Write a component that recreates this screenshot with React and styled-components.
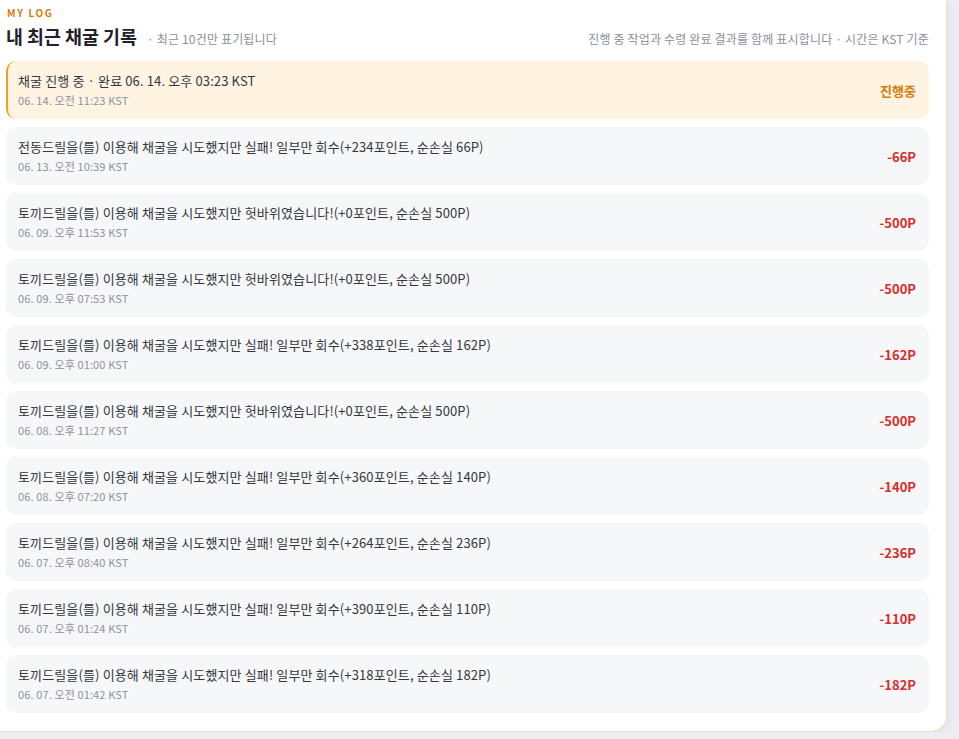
import styled, { createGlobalStyle } from 'styled-components';

const GlobalStyle = createGlobalStyle`
	html, body {
		margin: 0;
		background: #eceef2;
		font-family: 'Noto Sans CJK KR', 'Noto Sans', sans-serif;
	}
`;

const logs = [
	{ title: '채굴 진행 중 · 완료 06. 14. 오후 03:23 KST', time: '06. 14. 오전 11:23 KST', value: '진행중', pending: true },
	{ title: '전동드릴을(를) 이용해 채굴을 시도했지만 실패! 일부만 회수(+234포인트, 순손실 66P)', time: '06. 13. 오전 10:39 KST', value: '-66P' },
	{ title: '토끼드릴을(를) 이용해 채굴을 시도했지만 헛바위였습니다!(+0포인트, 순손실 500P)', time: '06. 09. 오후 11:53 KST', value: '-500P' },
	{ title: '토끼드릴을(를) 이용해 채굴을 시도했지만 헛바위였습니다!(+0포인트, 순손실 500P)', time: '06. 09. 오후 07:53 KST', value: '-500P' },
	{ title: '토끼드릴을(를) 이용해 채굴을 시도했지만 실패! 일부만 회수(+338포인트, 순손실 162P)', time: '06. 09. 오후 01:00 KST', value: '-162P' },
	{ title: '토끼드릴을(를) 이용해 채굴을 시도했지만 헛바위였습니다!(+0포인트, 순손실 500P)', time: '06. 08. 오후 11:27 KST', value: '-500P' },
	{ title: '토끼드릴을(를) 이용해 채굴을 시도했지만 실패! 일부만 회수(+360포인트, 순손실 140P)', time: '06. 08. 오후 07:20 KST', value: '-140P' },
	{ title: '토끼드릴을(를) 이용해 채굴을 시도했지만 실패! 일부만 회수(+264포인트, 순손실 236P)', time: '06. 07. 오후 08:40 KST', value: '-236P' },
	{ title: '토끼드릴을(를) 이용해 채굴을 시도했지만 실패! 일부만 회수(+390포인트, 순손실 110P)', time: '06. 07. 오후 01:24 KST', value: '-110P' },
	{ title: '토끼드릴을(를) 이용해 채굴을 시도했지만 실패! 일부만 회수(+318포인트, 순손실 182P)', time: '06. 07. 오전 01:42 KST', value: '-182P' },
];

const Card = styled.section`
	width: 947px;
	box-sizing: border-box;
	padding: 6px 17px 18px 6px;
	background: #ffffff;
	border-right: 1px solid #f1dfbf;
	border-bottom: 1px solid #f1dfbf;
	border-radius: 0 0 16px 0;
	box-shadow: 2px 3px 8px rgba(30, 40, 60, 0.06);
`;

const Eyebrow = styled.div`
	font-size: 10px;
	font-weight: 700;
	letter-spacing: 1.6px;
	color: #d97a06;
	line-height: 14px;
	padding-left: 1px;
`;

const HeaderRow = styled.div`
	display: flex;
	align-items: baseline;
	justify-content: space-between;
	margin-top: 3px;
	margin-bottom: 12px;
`;

const TitleGroup = styled.div`
	display: flex;
	align-items: baseline;
	gap: 10px;
`;

const Title = styled.h2`
	margin: 0;
	font-size: 18.4px;
	font-weight: 700;
	color: #1f2329;
	line-height: 26px;
`;

const Note = styled.span`
	font-size: 12px;
	letter-spacing: 0.17px;
	color: #8a9099;
`;

const List = styled.div`
	display: flex;
	flex-direction: column;
	gap: 8px;
`;

const Row = styled.div`
	display: flex;
	align-items: center;
	justify-content: space-between;
	height: 58px;
	box-sizing: border-box;
	padding: 0 13px 0 ${(p) => (p.$pending ? '10px' : '12px')};
	border-radius: 10px;
	background: ${(p) => (p.$pending ? '#fff3e2' : '#f6f7f9')};
	border-left: ${(p) => (p.$pending ? '2px solid #f0a020' : 'none')};
`;

const Text = styled.div`
	display: flex;
	flex-direction: column;
	gap: 3px;
`;

const RowTitle = styled.div`
	font-size: 13px;
	letter-spacing: 0.13px;
	color: #33373d;
	line-height: 18px;
`;

const RowTime = styled.div`
	font-size: 11px;
	letter-spacing: 0.12px;
	color: #8d929a;
	line-height: 15px;
`;

const Value = styled.div`
	font-size: 13px;
	font-weight: 700;
	color: ${(p) => (p.$pending ? '#d97a06' : '#dc2a2a')};
`;

export default function App() {
	return (
		<>
			<GlobalStyle />
			<Card>
				<Eyebrow>MY LOG</Eyebrow>
				<HeaderRow>
					<TitleGroup>
						<Title>내 최근 채굴 기록</Title>
						<Note>· 최근 10건만 표기됩니다</Note>
					</TitleGroup>
					<Note>진행 중 작업과 수령 완료 결과를 함께 표시합니다 · 시간은 KST 기준</Note>
				</HeaderRow>
				<List>
					{logs.map((log, i) => (
						<Row key={i} $pending={log.pending}>
							<Text>
								<RowTitle>{log.title}</RowTitle>
								<RowTime>{log.time}</RowTime>
							</Text>
							<Value $pending={log.pending}>{log.value}</Value>
						</Row>
					))}
				</List>
			</Card>
		</>
	);
}
